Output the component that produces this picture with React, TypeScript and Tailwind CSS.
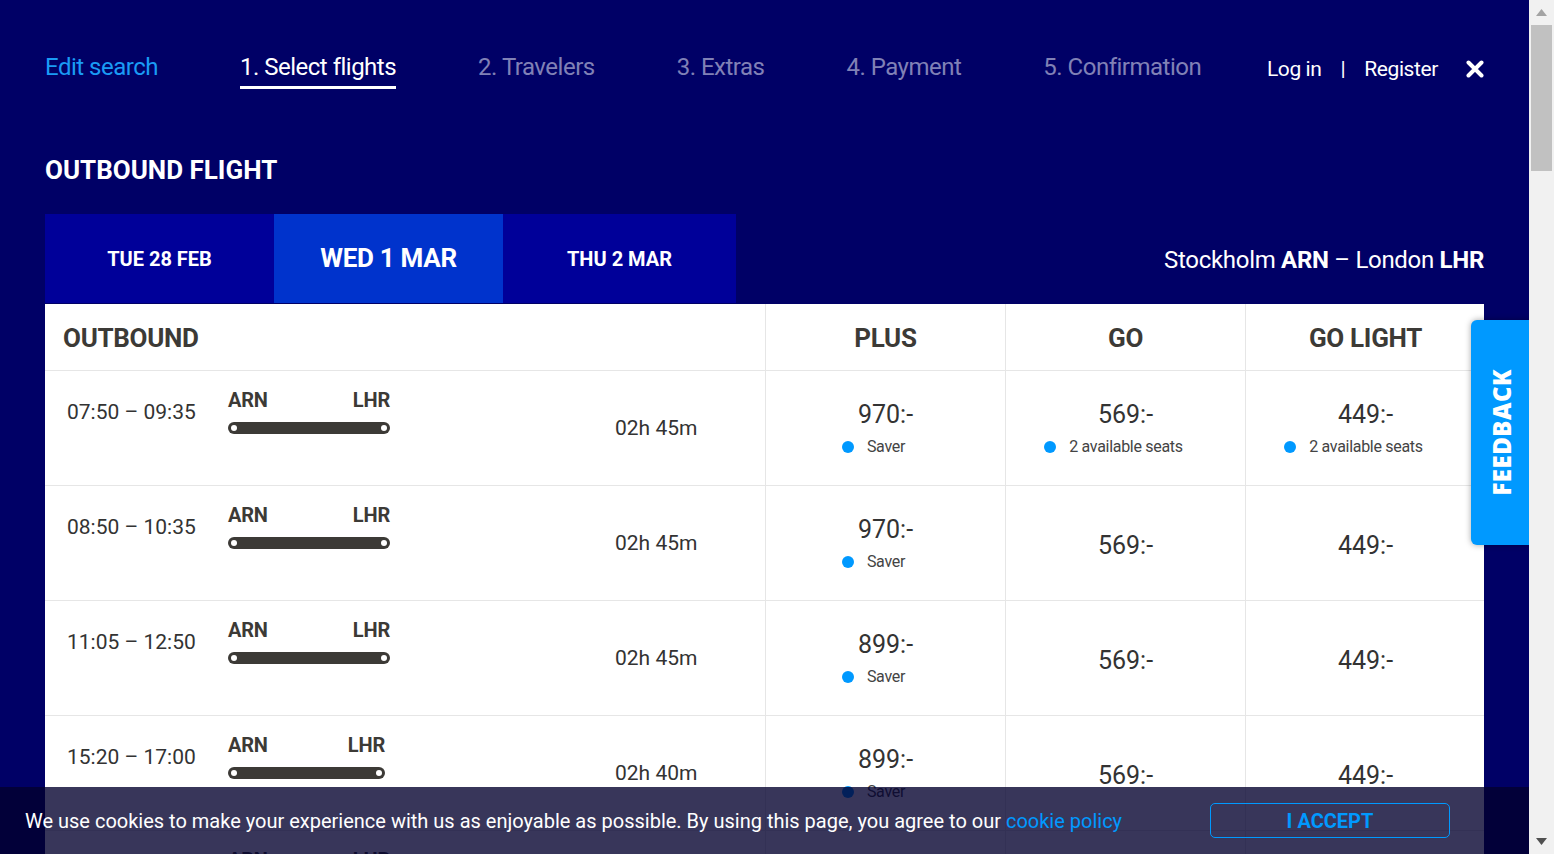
import React from "react";

type Row = {
  time: string;
  dur: string;
  bar: number;
  plus: string;
  plusSub?: string;
  go: string;
  goSub?: string;
  light: string;
  lightSub?: string;
};

const rows: Row[] = [
  { time: "07:50 – 09:35", dur: "02h 45m", bar: 162, plus: "970:-", plusSub: "Saver", go: "569:-", goSub: "2 available seats", light: "449:-", lightSub: "2 available seats" },
  { time: "08:50 – 10:35", dur: "02h 45m", bar: 162, plus: "970:-", plusSub: "Saver", go: "569:-", light: "449:-" },
  { time: "11:05 – 12:50", dur: "02h 45m", bar: 162, plus: "899:-", plusSub: "Saver", go: "569:-", light: "449:-" },
  { time: "15:20 – 17:00", dur: "02h 40m", bar: 157, plus: "899:-", plusSub: "Saver", go: "569:-", light: "449:-" },
  { time: "17:50 – 19:35", dur: "02h 45m", bar: 162, plus: "899:-", plusSub: "Saver", go: "569:-", light: "449:-" },
];

function PriceCell({ price, sub }: { price: string; sub?: string }) {
  return (
    <div className="flex flex-col items-center justify-center border-l border-[#e6e6e6] h-full">
      <div className={sub ? "text-[25px] leading-[30px] text-[#333333]" : "mt-[5px] text-[25px] leading-[30px] text-[#333333]"}>{price}</div>
      {sub && (
        <div className="flex items-center gap-[13px] pr-[24px] mt-[7px] text-[16px] leading-[20px] tracking-[-0.3px] text-[#444444]">
          <span className="block w-[12px] h-[12px] rounded-full bg-[#0099ff]" />
          <span>{sub}</span>
        </div>
      )}
    </div>
  );
}

function FlightRow({ r }: { r: Row }) {
  return (
    <div className="grid grid-cols-[720px_240px_240px_240px] h-[115px] border-b border-[#e6e6e6]">
      <div className="flex items-center pl-[22px] h-full">
        <div className="self-start mt-[28px] w-[161px] text-[21px] leading-[26px] text-[#333333]">{r.time}</div>
        <div className="self-start mt-[17px] w-[162px]">
          <div className="flex justify-between text-[20px] leading-[25px] font-bold tracking-[-0.2px] text-[#3c3a36]" style={{ width: r.bar }}>
            <span>ARN</span>
            <span>LHR</span>
          </div>
          <div
            className="mt-[9px] h-[12px] rounded-full bg-[#3c3a36] flex items-center justify-between px-[3px]"
            style={{ width: r.bar }}
          >
            <span className="block w-[6px] h-[6px] rounded-full bg-white" />
            <span className="block w-[6px] h-[6px] rounded-full bg-white" />
          </div>
        </div>
        <div className="ml-[225px] text-[21px] leading-[26px] text-[#333333]">{r.dur}</div>
      </div>
      <PriceCell price={r.plus} sub={r.plusSub} />
      <PriceCell price={r.go} sub={r.goSub} />
      <PriceCell price={r.light} sub={r.lightSub} />
    </div>
  );
}

export default function App() {
  const navItem = "pb-[4px] border-b-[3px] text-[24px] leading-[29px] tracking-[-0.5px]";
  return (
    <div className="h-[854px] w-full flex overflow-hidden bg-[#f1f1f1] [font-family:Roboto,'Liberation_Sans',sans-serif]">
      <div className="relative w-[1529px] h-full bg-[#000066] overflow-hidden">
        <div className="px-[45px]">
          {/* Nav */}
          <div className="flex items-start pt-[53px]">
            <div className="flex items-start gap-[82px]">
              <span className={`${navItem} border-transparent text-[#1a9bf5]`}>Edit search</span>
              <span className={`${navItem} border-white text-white`}>1. Select flights</span>
              <span className={`${navItem} border-transparent text-[#8081b6]`}>2. Travelers</span>
              <span className={`${navItem} border-transparent text-[#8081b6]`}>3. Extras</span>
              <span className={`${navItem} border-transparent text-[#8081b6]`}>4. Payment</span>
              <span className={`${navItem} border-transparent text-[#8081b6]`}>5. Confirmation</span>
            </div>
            <div className="ml-auto flex items-center mt-[2px] text-white text-[21px] leading-[28px] tracking-[-0.4px]">
              <span>Log in</span>
              <span className="mx-[19px]">|</span>
              <span>Register</span>
              <svg className="ml-[28px]" width="18" height="18" viewBox="0 0 18 18">
                <path d="M2.5 2.5 L15.5 15.5 M15.5 2.5 L2.5 15.5" stroke="white" strokeWidth="4" strokeLinecap="round" />
              </svg>
            </div>
          </div>

          {/* Heading */}
          <h1 className="mt-[65px] text-[26px] leading-[32px] font-bold text-white">OUTBOUND FLIGHT</h1>

          {/* Tabs */}
          <div className="mt-[28px] flex items-center">
            <div className="flex">
              <div className="w-[229px] h-[89px] bg-[#000099] flex items-center justify-center text-white font-bold text-[20px]">TUE 28 FEB</div>
              <div className="w-[229px] h-[89px] bg-[#0033cc] flex items-center justify-center text-white font-bold text-[26px] tracking-[-0.3px]">WED 1 MAR</div>
              <div className="w-[233px] h-[89px] bg-[#000099] flex items-center justify-center text-white font-bold text-[20px]">THU 2 MAR</div>
            </div>
            <div className="ml-auto text-white text-[24px] leading-[30px] mt-[2px] tracking-[-0.3px]">
              Stockholm <b>ARN</b> – London <b>LHR</b>
            </div>
          </div>

          {/* Table */}
          <div className="mt-[1px] bg-white">
            <div className="grid grid-cols-[720px_240px_240px_240px] h-[67px] border-b border-[#e6e6e6] text-[26px] font-bold tracking-[-0.3px] text-[#3c3a36]">
              <div className="flex items-center pl-[18px] pt-[2px]">OUTBOUND</div>
              <div className="flex items-center justify-center border-l border-[#e6e6e6] pt-[2px]">PLUS</div>
              <div className="flex items-center justify-center border-l border-[#e6e6e6] pt-[2px]">GO</div>
              <div className="flex items-center justify-center border-l border-[#e6e6e6] pt-[2px]">GO LIGHT</div>
            </div>
            {rows.map((r, i) => (
              <FlightRow key={i} r={r} />
            ))}
          </div>
        </div>

        {/* Feedback tab */}
        <div className="absolute right-0 top-[320px] w-[58px] h-[225px] bg-[#0099ff] rounded-l-[6px] shadow-[0_0_6px_rgba(0,0,0,0.35)] flex items-center justify-center pl-[3px]">
          <span className="[writing-mode:vertical-rl] rotate-180 text-white font-extrabold text-[24px] tracking-[0.5px] [font-family:'Open_Sans',sans-serif]">
            FEEDBACK
          </span>
        </div>

        {/* Cookie bar */}
        <div className="absolute left-0 right-0 bottom-0 h-[67px] bg-[rgba(2,0,46,0.79)] flex items-center justify-between pl-[25px] pr-[79px]">
          <p className="text-white text-[20px] leading-[26px]">
            We use cookies to make your experience with us as enjoyable as possible. By using this page, you agree to our{" "}
            <span className="text-[#0099ff]">cookie policy</span>
          </p>
          <button className="w-[240px] h-[35px] border border-[#0099ff] rounded-[5px] text-[#0099ff] font-bold text-[20px] leading-[26px]">
            I ACCEPT
          </button>
        </div>
      </div>

      {/* Scrollbar */}
      <div className="w-[25px] h-full bg-[#f1f1f1] flex flex-col items-center">
        <svg className="mt-[9px]" width="11" height="7" viewBox="0 0 11 7">
          <path d="M0 7 L5.5 0 L11 7 Z" fill="#a3a3a3" />
        </svg>
        <div className="mt-[9px] w-[21px] h-[146px] bg-[#c1c1c1]" />
        <svg className="mt-auto mb-[9px]" width="11" height="7" viewBox="0 0 11 7">
          <path d="M0 0 L5.5 7 L11 0 Z" fill="#505050" />
        </svg>
      </div>
    </div>
  );
}
